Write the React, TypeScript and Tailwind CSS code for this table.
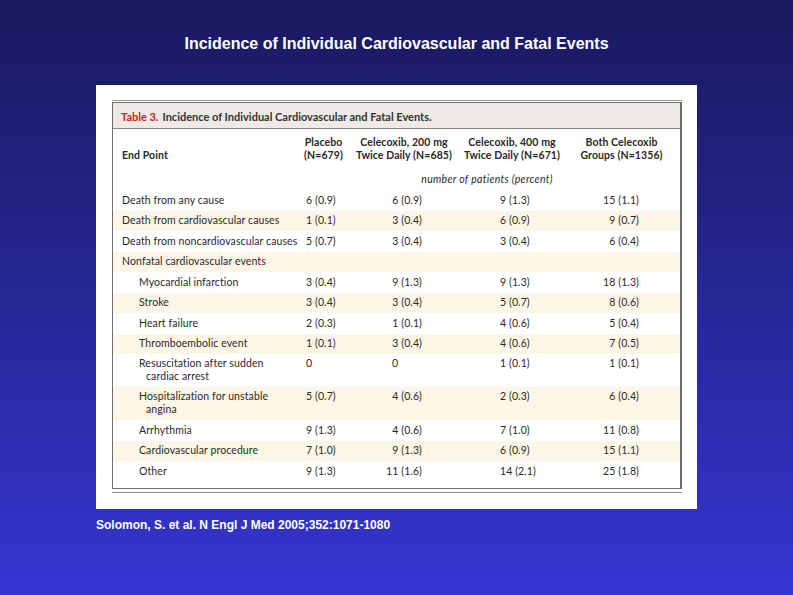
import React from 'react'

type Row = {
  label: string
  cont?: string
  sub?: boolean
  vals: string[]
}

const rows: Row[] = [
  { label: 'Death from any cause', vals: ['6 (0.9)', '6 (0.9)', '9 (1.3)', '15 (1.1)'] },
  { label: 'Death from cardiovascular causes', vals: ['1 (0.1)', '3 (0.4)', '6 (0.9)', '9 (0.7)'] },
  { label: 'Death from noncardiovascular causes', vals: ['5 (0.7)', '3 (0.4)', '3 (0.4)', '6 (0.4)'] },
  { label: 'Nonfatal cardiovascular events', vals: ['', '', '', ''] },
  { label: 'Myocardial infarction', sub: true, vals: ['3 (0.4)', '9 (1.3)', '9 (1.3)', '18 (1.3)'] },
  { label: 'Stroke', sub: true, vals: ['3 (0.4)', '3 (0.4)', '5 (0.7)', '8 (0.6)'] },
  { label: 'Heart failure', sub: true, vals: ['2 (0.3)', '1 (0.1)', '4 (0.6)', '5 (0.4)'] },
  { label: 'Thromboembolic event', sub: true, vals: ['1 (0.1)', '3 (0.4)', '4 (0.6)', '7 (0.5)'] },
  { label: 'Resuscitation after sudden', cont: 'cardiac arrest', sub: true, vals: ['0', '0', '1 (0.1)', '1 (0.1)'] },
  { label: 'Hospitalization for unstable', cont: 'angina', sub: true, vals: ['5 (0.7)', '4 (0.6)', '2 (0.3)', '6 (0.4)'] },
  { label: 'Arrhythmia', sub: true, vals: ['9 (1.3)', '4 (0.6)', '7 (1.0)', '11 (0.8)'] },
  { label: 'Cardiovascular procedure', sub: true, vals: ['7 (1.0)', '9 (1.3)', '6 (0.9)', '15 (1.1)'] },
  { label: 'Other', sub: true, vals: ['9 (1.3)', '11 (1.6)', '14 (2.1)', '25 (1.8)'] },
]

const grid = 'grid grid-cols-[184px_53px_108px_108px_111px]'

function ValueCell({ v, col }: { v: string; col: number }) {
  if (col === 0) return <div className="pl-[9px]">{v}</div>
  if (col === 1)
    return v === '0' ? <div className="pl-[42px]">{v}</div> : <div className="pr-[36px] text-right">{v}</div>
  if (col === 2) return <div className="pl-[42px]">{v}</div>
  return <div className="pr-[38px] text-right">{v}</div>
}

export default function App() {
  return (
    <div className="flex h-[595px] w-[793px] flex-col bg-gradient-to-b from-[#19195e] to-[#3535d2] font-['Liberation_Sans',Arial,sans-serif]">
      <h1 className="pt-[34px] text-center text-[16px] leading-[20px] font-bold text-white">
        Incidence of Individual Cardiovascular and Fatal Events
      </h1>

      <div className="mt-[31px] ml-[96px] h-[424px] w-[601px] bg-white px-[15px] pt-[15px] pl-[16px]">
        <div className="h-px w-full bg-[#9a9a9a]" />
        <div className="mt-px border border-r-2 border-[#6d6d6d] font-['Lato',sans-serif] text-[10.5px] tracking-[0.1px] text-[#2a2a2a]">
          <div className="flex h-[26px] items-center border-b border-[#8a8a8a] bg-[#eeebe6] pt-[4px] pl-[8px] text-[11px] font-bold tracking-normal text-[#333]">
            <span className="text-[#c8202f]">Table 3.</span>
            <span className="ml-[4px]">Incidence of Individual Cardiovascular and Fatal Events.</span>
          </div>

          <div className={`${grid} h-[41px] items-end pb-[8px] leading-[13px] font-bold`}>
            <div className="pl-[9px]">End Point</div>
            <div className="text-center">Placebo<br />(N=679)</div>
            <div className="text-center">Celecoxib, 200 mg<br />Twice Daily (N=685)</div>
            <div className="text-center">Celecoxib, 400 mg<br />Twice Daily (N=671)</div>
            <div className="text-center">Both Celecoxib<br />Groups (N=1356)</div>
          </div>

          <div className={`${grid} h-[20px] items-center`}>
            <div />
            <div className="col-span-4 text-center italic tracking-[0.3px]">number of patients (percent)</div>
          </div>

          {rows.map((r, i) => (
            <div
              key={r.label}
              className={`${grid} ${r.cont ? 'h-[33px] items-start pt-[3px]' : 'h-[20.5px] items-center'} leading-[13px] ${i % 2 === 1 ? 'bg-[#fcf6e7]' : ''}`}
            >
              <div className={`whitespace-nowrap ${r.sub ? 'pl-[26px]' : 'pl-[9px]'}`}>
                {r.label}
                {r.cont && <div className="pl-[7px]">{r.cont}</div>}
              </div>
              {r.vals.map((v, c) => (
                <ValueCell key={c} v={v} col={c} />
              ))}
            </div>
          ))}
          <div className="h-[6px]" />
        </div>
        <div className="mt-[3px] h-px w-full bg-[#8a8a8a]" />
      </div>

      <p className="mt-[8px] ml-[96px] text-[12px] leading-[16px] font-bold text-white">
        Solomon, S. et al. N Engl J Med 2005;352:1071-1080
      </p>
    </div>
  )
}
